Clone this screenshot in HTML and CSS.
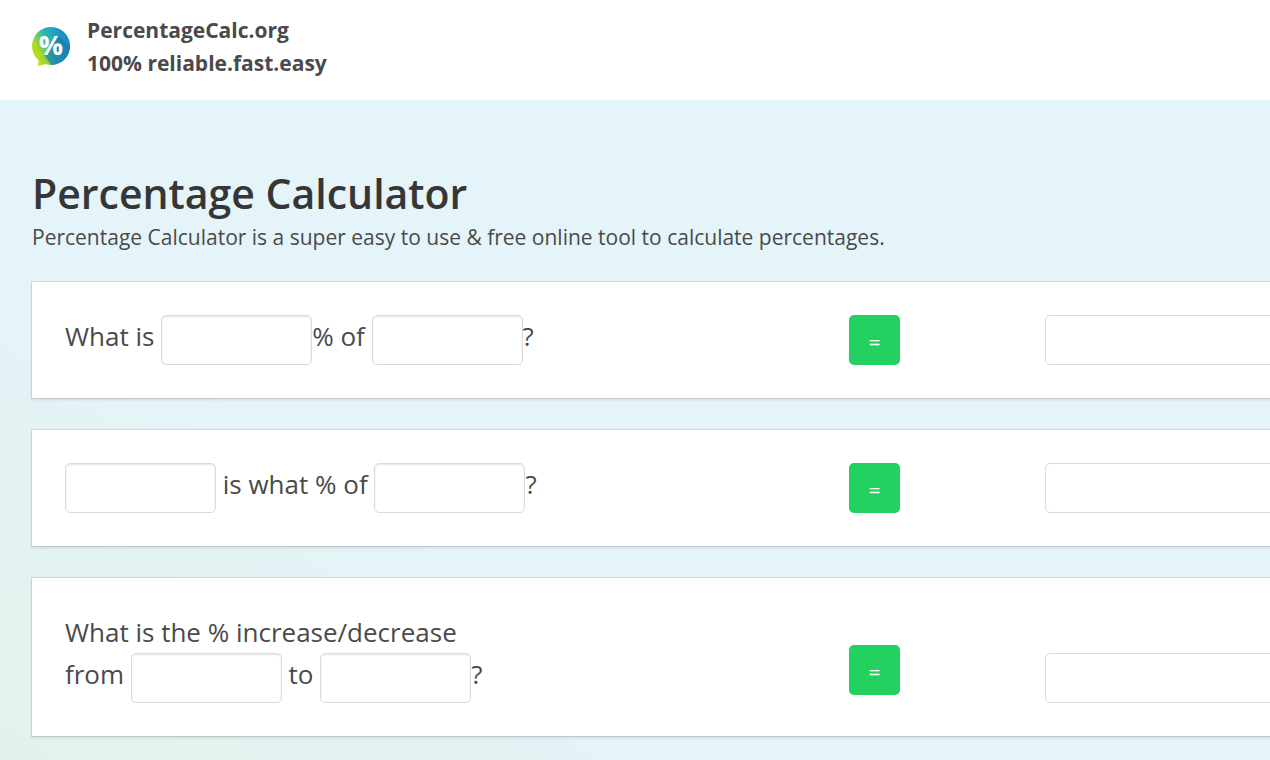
FILE: index.html
```html
<!DOCTYPE html>
<html lang="en">
<head>
    <meta charset="UTF-8">
    <meta name="viewport" content="width=device-width, initial-scale=1.0">
    <title>Percentage Calculator</title>
    <link rel="stylesheet" href="styles.css">
</head>
<body>
    <header class="header">
        <svg class="logo" viewBox="0 0 40 40" aria-hidden="true">
            <defs>
                <linearGradient id="bubble" x1="0" y1="0.8" x2="1" y2="0.3">
                    <stop offset="0" stop-color="#d2e600"/>
                    <stop offset="0.25" stop-color="#a4d82c"/>
                    <stop offset="0.5" stop-color="#2fb8b0"/>
                    <stop offset="1" stop-color="#1485c9"/>
                </linearGradient>
                <clipPath id="bubbleClip">
                    <path d="M20 0a19 19 0 1 1-6 37C11.500 38 9.500 38.500 6.500 38.500 7.700 36.500 7.800 34.500 7.200 33A19 19 0 0 1 20 0z"/>
                </clipPath>
            </defs>
            <g clip-path="url(#bubbleClip)">
                <rect width="40" height="40" fill="url(#bubble)"/>
                <path d="M28 9L40 21V40H22L13 28z" fill="#1673ae" opacity="0.6"/>
            </g>
            <text class="logo-sign" x="20" y="28" text-anchor="middle">%</text>
        </svg>
        <div class="brand">
            <p>PercentageCalc.org</p>
            <p>100% reliable.fast.easy</p>
        </div>
    </header>

    <main class="main">
        <h1>Percentage Calculator</h1>
        <p class="subtitle">Percentage Calculator is a super easy to use &amp; free online tool to calculate percentages.</p>

        <form class="card" id="percentOf">
            <div class="question">What is <input type="text" class="number" name="a" aria-label="Percent">% of <input type="text" class="number" name="b" aria-label="Number">?</div>
            <div><button type="submit">=</button></div>
            <div><input type="text" class="result" name="result" aria-label="Result" readonly></div>
        </form>

        <form class="card" id="whatPercent">
            <div class="question"><input type="text" class="number" name="a" aria-label="Part"> is what % of <input type="text" class="number" name="b" aria-label="Total">?</div>
            <div><button type="submit">=</button></div>
            <div><input type="text" class="result" name="result" aria-label="Result" readonly></div>
        </form>

        <form class="card card-change" id="percentChange">
            <div class="question">What is the % increase/decrease<br>from <input type="text" class="number" name="a" aria-label="From"> to <input type="text" class="number" name="b" aria-label="To">?</div>
            <div><button type="submit">=</button></div>
            <div><input type="text" class="result" name="result" aria-label="Result" readonly></div>
        </form>
    </main>

    <script>
        const formulas = {
            percentOf: (a, b) => a * b / 100,
            whatPercent: (a, b) => a / b * 100 + '%',
            percentChange: (a, b) => (b - a) / a * 100 + '%'
        };

        document.querySelectorAll('.card').forEach(function(form) {
            form.addEventListener('submit', function(event) {
                event.preventDefault();
                const a = parseFloat(form.elements.a.value);
                const b = parseFloat(form.elements.b.value);
                form.elements.result.value = formulas[form.id](a, b);
            });
        });
    </script>
</body>
</html>
```
FILE: styles.css
```css
* {
    box-sizing: border-box;
}
body {
    font-family: 'Segoe UI', 'Open Sans', sans-serif;
    color: #4a4a4a;
    margin: 0;
    min-height: 100vh;
    display: flex;
    flex-direction: column;
    overflow-x: hidden;
}
h1, p {
    margin: 0;
}
.header {
    display: flex;
    align-items: center;
    gap: 16px;
    padding: 14px 31px 20px;
    background: #fff;
}
.logo {
    width: 40px;
    height: 40px;
    flex: none;
}
.logo-sign {
    font-size: 27px;
    font-weight: 700;
    fill: #fff;
}
.brand {
    font-size: 21px;
    line-height: 33px;
    font-weight: 700;
}
.main {
    flex: 1;
    padding: 70px 32px 24px;
    background: linear-gradient(35deg, #e2f2ea 0%, #e4f4f9 35%, #e4f4f9 100%);
    overflow: hidden;
}
h1 {
    font-size: 41px;
    line-height: 46px;
    font-weight: 600;
    color: #363636;
}
.subtitle {
    font-size: 21px;
    line-height: 33px;
    margin: 5px 0 28px;
}
/* half / eighth / rest, wider than small screens */
.card {
    display: grid;
    grid-template-columns: 4fr 1fr 3fr;
    min-width: 1634px;
    padding: 33px;
    margin-bottom: 32px;
    background: #fff;
    box-shadow: 0 2px 3px rgba(10, 10, 10, 0.1), 0 0 0 1px rgba(10, 10, 10, 0.1);
}
.question {
    font-size: 26px;
    line-height: 42px;
}
input {
    height: 50px;
    padding: 8px 12px;
    border: 1px solid #dbdbdb;
    border-radius: 5px;
    background: #fff;
    color: #363636;
    font-family: inherit;
    font-size: 21px;
    vertical-align: top;
}
.number {
    width: 151px;
    box-shadow: inset 0 1px 2px rgba(10, 10, 10, 0.1);
}
.result {
    width: 100%;
}
button {
    width: 51px;
    height: 50px;
    padding: 4px 0 0;
    border: none;
    border-radius: 5px;
    background: #23d160;
    color: #fff;
    font-family: inherit;
    font-size: 21px;
    cursor: pointer;
    vertical-align: top;
}
button:hover {
    background: #22c65b;
}
.card-change button {
    margin-top: 34px;
}
.card-change .result {
    margin-top: 42px;
}
```
